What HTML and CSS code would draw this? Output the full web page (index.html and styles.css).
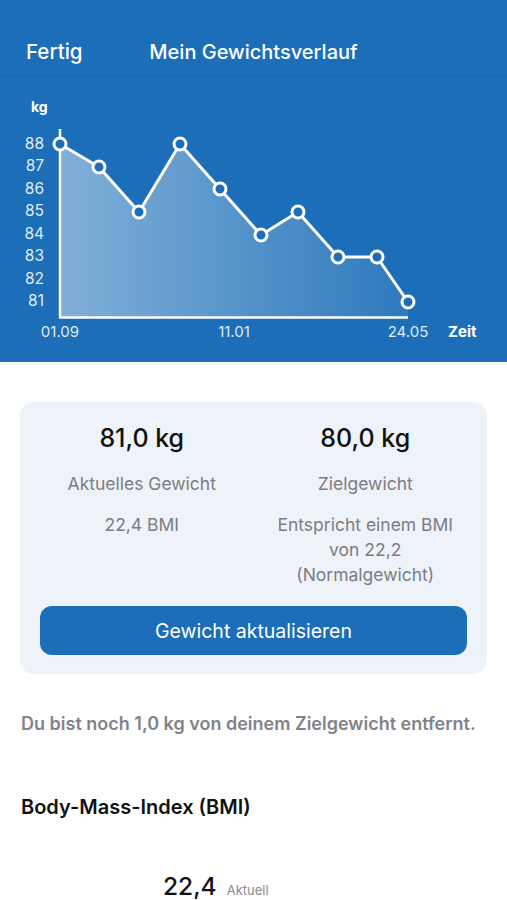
FILE: index.html
```html
<!DOCTYPE html>
<html lang="de">
<head>
  <meta charset="UTF-8" />
  <meta name="viewport" content="width=device-width, initial-scale=1.0" />
  <title>Mein Gewichtsverlauf</title>
  <link rel="stylesheet" href="styles.css">
</head>
<body>
  <header class="top">
    <div class="nav">
      <button class="nav-btn">Fertig</button>
      <div class="nav-title">Mein Gewichtsverlauf</div>
      <div></div>
    </div>
    <svg class="chart" viewBox="0 78 507 284" width="507" height="284">
      <defs>
        <linearGradient id="fill" x1="0" y1="0" x2="1" y2="0">
          <stop offset="0" stop-color="#fff" stop-opacity="0.45" />
          <stop offset="1" stop-color="#fff" stop-opacity="0.08" />
        </linearGradient>
      </defs>
      <text class="unit" x="31" y="113">kg</text>
      <g class="ylab">
        <text x="44" y="150">88</text>
        <text x="44" y="172">87</text>
        <text x="44" y="195">86</text>
        <text x="44" y="217">85</text>
        <text x="44" y="240">84</text>
        <text x="44" y="262">83</text>
        <text x="44" y="285">82</text>
        <text x="44" y="307">81</text>
      </g>
      <polygon fill="url(#fill)" points="60,145 99,168 139,213 180,145 220,190 261,236 298,213 338,258 377,258 408,303 408,318 60,318" />
      <path class="axis" d="M60 130 V318.5 H408" />
      <polyline class="line" points="60,145 99,168 139,213 180,145 220,190 261,236 298,213 338,258 377,258 408,303" />
      <g class="dots">
        <circle cx="60" cy="145" r="6" />
        <circle cx="99" cy="168" r="6" />
        <circle cx="139" cy="213" r="6" />
        <circle cx="180" cy="145" r="6" />
        <circle cx="220" cy="190" r="6" />
        <circle cx="261" cy="236" r="6" />
        <circle cx="298" cy="213" r="6" />
        <circle cx="338" cy="258" r="6" />
        <circle cx="377" cy="258" r="6" />
        <circle cx="408" cy="303" r="6" />
      </g>
      <g class="xlab">
        <text x="60" y="338">01.09</text>
        <text x="234" y="338">11.01</text>
        <text x="408" y="338">24.05</text>
      </g>
      <text class="zeit" x="448" y="338">Zeit</text>
    </svg>
  </header>

  <main class="content">
    <section class="card">
      <div class="stats">
        <div class="stat">
          <div class="stat-value">81,0 kg</div>
          <div class="stat-label">Aktuelles Gewicht</div>
          <div class="stat-note">22,4 BMI</div>
        </div>
        <div class="stat">
          <div class="stat-value">80,0 kg</div>
          <div class="stat-label">Zielgewicht</div>
          <div class="stat-note">Entspricht einem BMI<br>von 22,2<br>(Normalgewicht)</div>
        </div>
      </div>
      <button class="update-btn">Gewicht aktualisieren</button>
    </section>

    <p class="remaining">Du bist noch 1,0 kg von deinem Zielgewicht entfernt.</p>

    <h2 class="section-title">Body-Mass-Index (BMI)</h2>

    <div class="bmi-row">
      <span class="bmi-value">22,4</span>
      <span class="bmi-label">Aktuell</span>
    </div>
  </main>
</body>
</html>
```

FILE: styles.css
```css
body {
  margin: 0;
  padding: 0;
  font-family: Inter, "Noto Sans", sans-serif;
  background: #fff;
  color: #111;
  width: 507px;
  overflow: hidden;
}
.top {
  background: #1b6eb7;
  height: 362px;
}
.nav {
  display: grid;
  grid-template-columns: 1fr auto 1fr;
  align-items: center;
  height: 77px;
  padding: 38px 0 12px;
  box-sizing: border-box;
  border-bottom: 1px solid rgba(0, 0, 0, 0.06);
}
.nav-btn {
  justify-self: start;
  margin-left: 26px;
  padding: 0;
  border: none;
  background: none;
  color: #fff;
  font-family: inherit;
  font-size: 20.5px;
  font-weight: 500;
  line-height: 28px;
}
.nav-title {
  color: #fff;
  font-size: 20px;
  font-weight: 500;
  line-height: 28px;
}
.chart {
  display: block;
}
.chart text {
  font-family: Inter, "Noto Sans", sans-serif;
}
.unit {
  fill: #fff;
  font-size: 14px;
  font-weight: 700;
}
.ylab text {
  fill: rgba(255, 255, 255, 0.88);
  font-size: 15.5px;
  text-anchor: end;
}
.xlab text {
  fill: rgba(255, 255, 255, 0.88);
  font-size: 15px;
  text-anchor: middle;
}
.zeit {
  fill: #fff;
  font-size: 15px;
  font-weight: 700;
}
.axis {
  fill: none;
  stroke: #fff;
  stroke-width: 2.5;
}
.line {
  fill: none;
  stroke: #fff;
  stroke-width: 3;
  stroke-linejoin: round;
}
.dots circle {
  fill: #1b6eb7;
  stroke: #fff;
  stroke-width: 3;
}
.content {
  padding: 40px 20px 0;
}
.card {
  background: #eef3fa;
  border-radius: 14px;
  padding: 21px 20px 19px;
}
.stats {
  display: grid;
  grid-template-columns: 1fr 1fr;
  column-gap: 20px;
  text-align: center;
}
.stat-value {
  font-size: 25px;
  font-weight: 500;
  line-height: 30px;
  color: #111;
}
.stat-label {
  margin-top: 19px;
  font-size: 17.5px;
  line-height: 24px;
  color: #7b7d82;
}
.stat-note {
  margin-top: 16px;
  font-size: 17.5px;
  line-height: 25px;
  color: #7b7d82;
}
.update-btn {
  display: block;
  width: 100%;
  height: 49px;
  margin-top: 19px;
  border: none;
  border-radius: 12px;
  background: #1b6eb7;
  color: #fff;
  font-family: inherit;
  font-size: 19.5px;
  font-weight: 400;
}
.remaining {
  margin: 38px 0 0 1px;
  font-size: 18px;
  font-weight: 600;
  line-height: 24px;
  color: #818388;
}
.section-title {
  margin: 58px 0 0 1px;
  font-size: 20px;
  font-weight: 600;
  line-height: 26px;
  color: #111;
}
.bmi-row {
  display: flex;
  align-items: baseline;
  gap: 10px;
  margin-top: 50px;
  padding-left: 143px;
}
.bmi-value {
  font-size: 24.5px;
  font-weight: 500;
  line-height: 32px;
}
.bmi-label {
  font-size: 13px;
  color: #8a8c90;
}
```
